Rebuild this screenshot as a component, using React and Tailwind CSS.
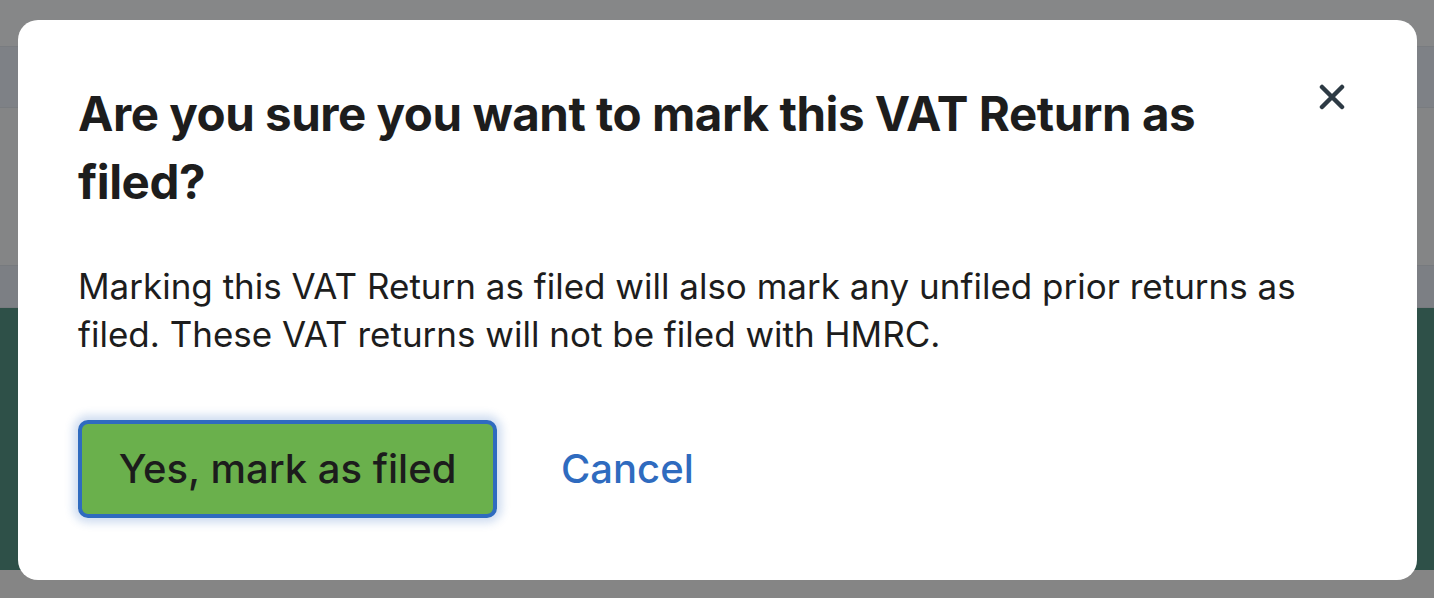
export default function App() {
  return (
    <div className="relative w-[1434px] h-[598px] overflow-hidden" style={{ fontFamily: "Inter, 'Noto Sans', sans-serif" }}>
      {/* underlying page dimmed by overlay */}
      <div className="flex flex-col h-full">
        <div className="h-[46px] bg-[#868788]" />
        <div className="h-[62px] bg-[#7e8186] border-t border-b border-[#797c80]" />
        <div className="h-[157px] bg-[#848586]" />
        <div className="h-[43px] bg-[#7c7f84] border-t border-b border-[#777a7e]" />
        <div className="h-[262px] bg-[#2e5048]" />
        <div className="flex-1 bg-[#858585]" />
      </div>

      {/* modal */}
      <div className="absolute left-[18px] top-[20px] w-[1399px] h-[560px] bg-white rounded-[20px] px-[60px] pt-[60px]">
        <button className="absolute right-[70px] top-[62px] w-[30px] h-[30px] flex items-center justify-center text-[#2d3a44]">
          <svg width="26" height="26" viewBox="0 0 26 26" fill="none" stroke="currentColor" strokeWidth="4.5" strokeLinecap="round">
            <path d="M3 3 L23 23 M23 3 L3 23" />
          </svg>
        </button>
        <h2 className="w-[1240px] text-[47.5px] leading-[68px] font-bold text-[#1d1d1d] tracking-[-0.01em]">
          Are you sure you want to mark this VAT Return as filed?
        </h2>
        <p className="mt-[46px] text-[35px] leading-[48px] text-[#1d1d1d]">
          Marking this VAT Return as filed will also mark any unfiled prior returns as filed. These VAT returns will not be filed with HMRC.
        </p>
        <div className="mt-[62px] flex items-center gap-[64px]">
          <button className="w-[419px] h-[98px] rounded-[10px] bg-[#6ab04c] border-[4px] border-[#2f6bbf] shadow-[0_0_8px_5px_rgba(47,107,191,0.22)] text-[40px] font-medium text-[#1c1c1c]">
            Yes, mark as filed
          </button>
          <button className="text-[40px] font-medium text-[#2f6bbf]">Cancel</button>
        </div>
      </div>
    </div>
  );
}
